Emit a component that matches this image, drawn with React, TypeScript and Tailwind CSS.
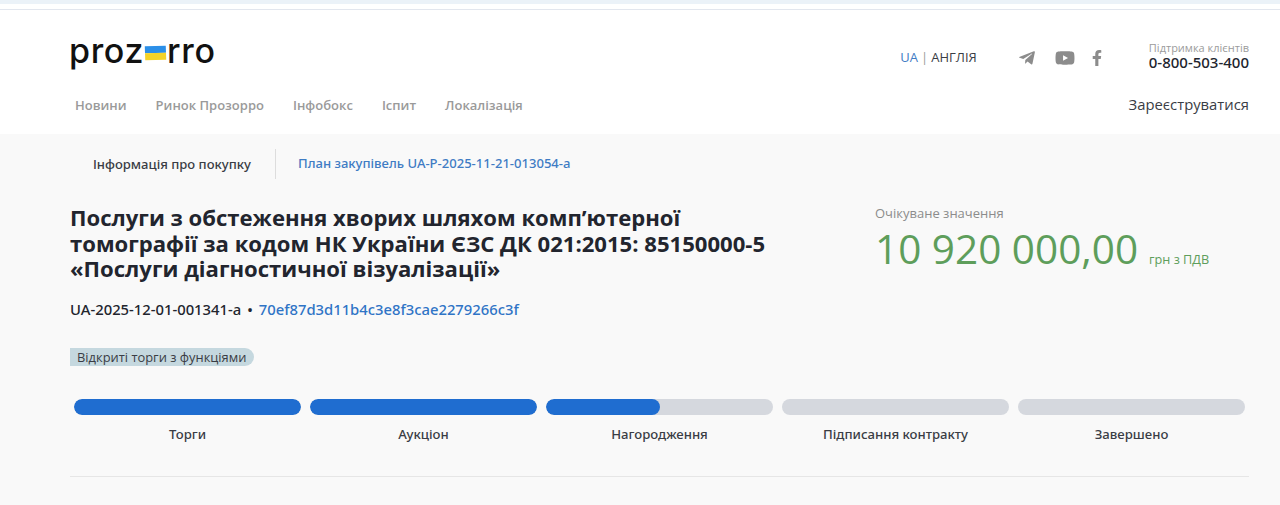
import { FaTelegramPlane, FaYoutube, FaFacebookF } from "react-icons/fa";

const menu = ["Новини", "Ринок Прозорро", "Інфобокс", "Іспит", "Локалізація"];

const stages = [
  { name: "Торги", fill: "w-full" },
  { name: "Аукціон", fill: "w-full" },
  { name: "Нагородження", fill: "w-1/2" },
  { name: "Підписання контракту", fill: "w-0" },
  { name: "Завершено", fill: "w-0" },
];

export default function App() {
  return (
    <div className="h-[505px] w-[1280px] overflow-hidden bg-[#f9f9f9] font-['Open_Sans','Noto_Sans',sans-serif] text-[#22252e]">
      {/* Top strip */}
      <div className="h-[10px] border-b border-[#e2e6ee] bg-white">
        <div className="h-1 bg-[#ebf2f8]" />
      </div>

      {/* Header */}
      <header className="h-[124px] bg-white pl-[70px] pr-[31px]">
        <div className="flex h-[85px] items-start justify-between">
          <div className="-ml-[1px] mt-[17px] flex items-center font-['Inter',sans-serif] text-[34px] font-medium leading-[48px] tracking-[0.65px] text-[#111]">
            <span>proz</span>
            <span className="mx-[1px] mt-[3px] block w-[21px] -rotate-2">
              <span className="block h-[7px] bg-[#2b8fe8]" />
              <span className="block h-[7px] bg-[#f5d327]" />
            </span>
            <span>rro</span>
          </div>
          <div className="flex items-start">
            <div className="mt-[39px] flex items-center text-[13px] leading-[16px]">
              <span className="text-[#3f7cc4]">UA</span>
              <span className="mx-[3px] text-[#9a9a9a]">|</span>
              <span className="text-[#3a3d45]">АНГЛІЯ</span>
            </div>
            <div className="ml-[41px] mt-[38px] flex items-center text-[#8c8c8c]">
              <FaTelegramPlane className="h-[18px] w-[18px]" />
              <FaYoutube className="ml-[19px] h-[20px] w-[20px]" />
              <FaFacebookF className="ml-[17px] h-[16px] w-[10px]" />
            </div>
            <div className="ml-[47px] mt-[31px] flex flex-col items-end">
              <span className="text-[11px] leading-[14px] text-[#9b9b9b]">Підтримка клієнтів</span>
              <span className="-mt-[1px] font-['Noto_Sans',sans-serif] text-[15px] font-medium leading-[16px] text-[#22252e]">0-800-503-400</span>
            </div>
          </div>
        </div>
        <div className="flex items-center justify-between">
          <nav className="ml-[5px] flex gap-[29px] text-[13px] font-semibold leading-[18px] text-[#9a9a9a]">
            {menu.map((item) => (
              <span key={item}>{item}</span>
            ))}
          </nav>
          <span className="mb-[1px] text-[14.8px] leading-[18px] text-[#3a3d45]">Зареєструватися</span>
        </div>
      </header>

      {/* Purchase tabs */}
      <div className="mt-[15px] flex h-[30px] items-center pl-[70px] font-['Noto_Sans',sans-serif] text-[13.05px] font-medium">
        <span className="w-[206px] border-r border-[#dddddd] pl-[23px] leading-[30px] text-[#3a3d45]">Інформація про покупку</span>
        <span className="ml-[22px] text-[#3f7cc4]">План закупівель UA-P-2025-11-21-013054-a</span>
      </div>

      {/* Title and value */}
      <section className="mt-[26px] flex pl-[70px]">
        <h1 className="w-[805px] text-[22.1px] font-bold leading-[25.5px] text-[#22252e]">
          Послуги з обстеження хворих шляхом комп’ютерної
          <br />
          томографії за кодом НК України ЄЗС ДК 021:2015: 85150000-5
          <br />
          «Послуги діагностичної візуалізації»
        </h1>
        <div className="-mt-[1px]">
          <div className="text-[13px] leading-[18px] text-[#8c8c8c]">Очікуване значення</div>
          <div className="mt-[3px] flex items-baseline text-[#5e9e5b]">
            <span className="text-[40.5px] leading-[48px]">10 920 000,00</span>
            <span className="ml-[11px] text-[12.7px]">грн з ПДВ</span>
          </div>
        </div>
      </section>

      <div className="mt-[17px] pl-[70px] font-['Noto_Sans',sans-serif] text-[14.8px] font-medium leading-[20px]">
        <span>UA-2025-12-01-001341-a</span>
        <span className="mx-[6px]">•</span>
        <span className="text-[#2f74c6]">70ef87d3d11b4c3e8f3cae2279266c3f</span>
      </div>

      <div className="mt-[25px] pl-[70px]">
        <span className="inline-block rounded-r-full rounded-l-[9px] bg-[#c5d8df] pl-[7px] pr-[8px] text-[12.9px] leading-[18px] text-[#3a3d45]">
          Відкриті торги з функціями
        </span>
      </div>

      {/* Stages */}
      <div className="mt-[31px] grid grid-cols-5 gap-[9px] pl-[74px] pr-[35px]">
        {stages.map((stage) => (
          <div key={stage.name} className="flex flex-col items-center">
            <div className="h-[16px] w-full overflow-hidden rounded-full bg-[#d5d8de]">
              <div className={`h-full rounded-full bg-[#1f6dd0] ${stage.fill}`} />
            </div>
            <span className="mt-[10px] font-['Noto_Sans',sans-serif] text-[13.15px] font-medium leading-[18px] text-[#3a3d45]">{stage.name}</span>
          </div>
        ))}
      </div>

      <div className="ml-[70px] mr-[31px] mt-[33px] border-t border-[#e6e6e6]" />
    </div>
  );
}
